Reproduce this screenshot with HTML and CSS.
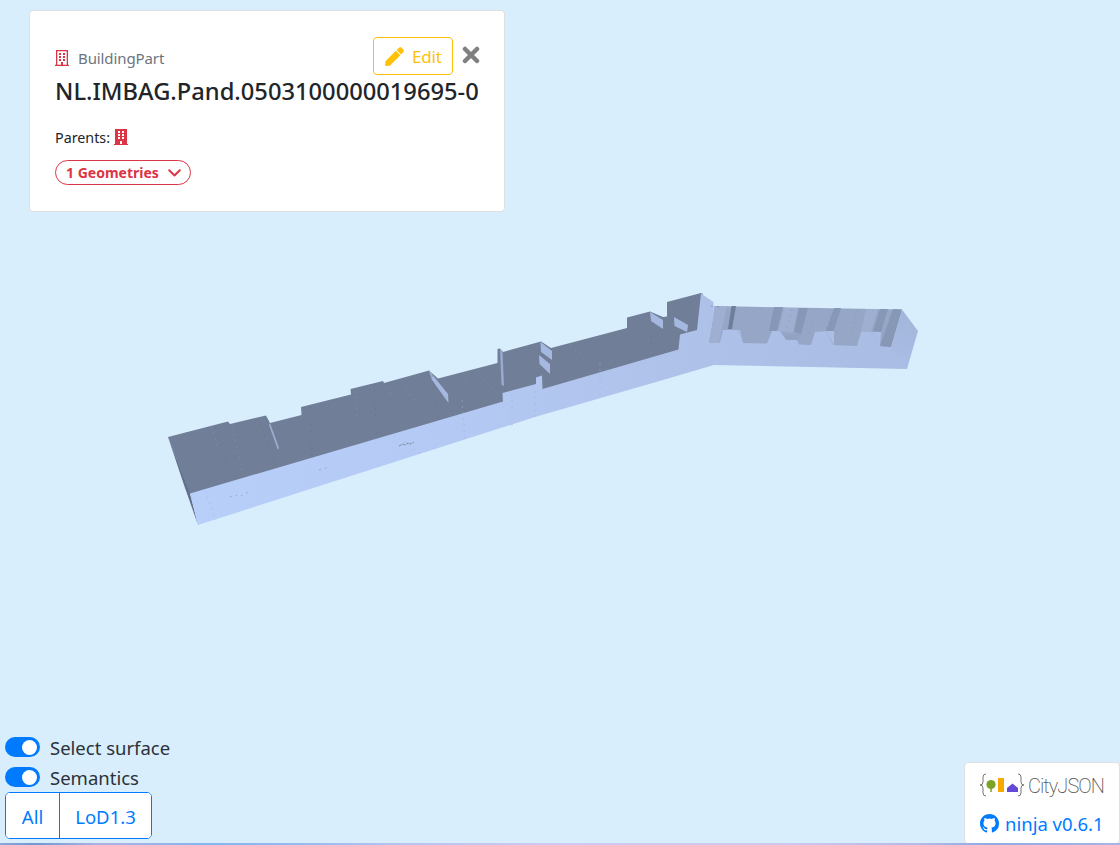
FILE: index.html
```html
<!DOCTYPE html>
<html lang="en">
<head>
<meta charset="utf-8">
<title>CityJSON ninja</title>
<link rel="stylesheet" href="styles.css">
</head>
<body>
<main class="viewer">
  <svg class="scene" viewBox="0 0 1120 845" aria-hidden="true">
    <defs>
      <linearGradient id="wall" x1="190" y1="0" x2="918" y2="0" gradientUnits="userSpaceOnUse">
        <stop offset="0" stop-color="#b8cffa"/><stop offset=".35" stop-color="#b4caf4"/>
        <stop offset=".65" stop-color="#afc2ea"/><stop offset="1" stop-color="#a9bce4"/>
      </linearGradient>
      <linearGradient id="end" x1="0" y1="310" x2="0" y2="369" gradientUnits="userSpaceOnUse">
        <stop offset="0" stop-color="#a2b5da"/><stop offset="1" stop-color="#aabde5"/>
      </linearGradient>
    </defs>
    <!-- left wing, inner walls -->
    <path fill="#707e98" d="M168 437L228 421.500L230 424L266 415.500L270 423L301.500 415L301 407L351 394.500L350.500 389L383 381L384 383L429 370.500L438 378.500L497.500 363L497.500 349L500 348.500L503 352L541 341.500L551 348L627 328L627 317.500L650 311.500L663 317L667 316.500L667 302L701 293L703 294L699 332L681 350L600 380L190 494Z"/>
    <path fill="#62708a" d="M168 437L190 493L198 525L184 485Z"/>
    <!-- outer wall -->
    <path fill="url(#wall)" d="M190 493.500L503 401.500L502.500 393L536 384L536 377.500L542 375.500L542.500 389L678.500 349.500L680 334.500L697 330L701 293.500L713.500 302V320L900 320L907 369L714 365L663 380L535 417L198 525Z"/>
    <path fill="#a5b8df" d="M429 370.500L448 394L448.500 403L432 380ZM540.500 342L552 351L552 360L541 352ZM539 355L550 364L550 374L539.500 364ZM650 312L663 320L663 329L651 321ZM674 317L688 325L687 332L674.500 326Z"/>
    <path fill="#9aabcf" d="M500 348.500L502.500 351L504 386L501.500 385Z"/>
    <path fill="#9fb0d4" d="M270 423L279 448L278 450L269 425Z"/>
    <!-- right wing, inner walls -->
    <path fill="#95a6c7" d="M714 306L902 309.500L891 347L880 346L873 332L861 332L857 346L833 345L826 331L815 332L811 345L799 344.500L797 340L786 340L780 331L772 331L767 343.500L743 343L738 330L723 330L720 342.500H709L713.500 318Z"/>
    <path fill="#8797b6" d="M774 307L783 307L777 331H769ZM799 308L808 308L801 334L794 332ZM834 308L841 308L833 333L826 331ZM880 309L888 309L881 332L873 331ZM893 309L902 309.500L891 347L880 346Z"/>
    <path fill="#6f7e98" d="M731.500 306H736L732 329H728Z"/>
    <path fill="#9eafd2" d="M784 308H798L793 333L778 331ZM866 309H878L871 332H861ZM714 306H727L719 342.500H709L713.500 318Z"/>
    <path fill="#acbee6" d="M826 331H834V345.500ZM873 332H881L880 346ZM738 330H740L743 343Z"/>
    <path fill="#91a2c3" d="M785 335L801 334L797 340L786 339Z"/>
    <path fill="url(#end)" d="M902 309.500L918 331L907 369L891 347Z"/>
    <g class="seams">
      <path stroke="#65738d" d="M215 427L230 479M258 418L276 468M310 406L312 457M374 384L377 438M432 375L438 421M650 330L652 357M711 306L721 307"/>
      <path stroke="#8997b0" d="M211 427L219 450M232 428L243 473M355 396L358 423M383 382L391 394M407 389L418 405M462 372L468 382M483 379L494 391M570 345L590 363M792 309L786 330M831 309L826 330M816 309L808 337M857 310L850 340"/>
      <path stroke="#9fb3d9" d="M205 491L216 520M394 435L422 454M462 400L465 440M512 394L512 427M535 391L535 417M600 363L600 398"/>
      <path stroke="#7d8cab" d="M230 497L236 495L239 497L248 492M319 470L330 467"/>
    </g>
    <path fill="none" stroke="#76839d" stroke-width=".9" stroke-dasharray="3 1" d="M399 446L403 444L405 445L408 443L410 444L414 442"/>
  </svg>

  <section class="card">
    <header class="card-head">
      <div class="kind">
        <svg class="building" viewBox="0 0 14 16"><path fill="none" stroke="currentColor" stroke-width="1.300" d="M1.650 15V.65H12.350V15M0 15.350H14"/><path fill="currentColor" d="M4 3h2v2H4zm4 0h2v2H8zM4 6h2v2H4zm4 0h2v2H8zM4 9h2v2H4zm4 0h2v2H8zM6 12h2v3H6z"/></svg>
        <span class="kind-name">BuildingPart</span>
      </div>
      <div class="actions">
        <button class="edit"><svg class="pencil" viewBox="0 0 512 512"><path fill="currentColor" d="M291 98L414 221 130 505 21 511Q0 511 1 490L12 381zM498 74L438 14Q414-10 387 14L310 79 433 202 498 125Q522 99 498 74z"/></svg><span>Edit</span></button>
        <button class="close" aria-label="Close"><svg viewBox="0 0 18 18"><path d="M3 3L15 15M15 3L3 15" stroke="currentColor" stroke-width="4.500" stroke-linecap="round"/></svg></button>
      </div>
    </header>
    <h1 class="title">NL.IMBAG.Pand.0503100000019695-0</h1>
    <p class="parents"><span class="parents-label">Parents:</span>
      <svg class="building" viewBox="0 0 14 16"><path fill="currentColor" fill-rule="evenodd" d="M1 0H13V15H14V16H0V15H1zM4 2v2h2V2zm4 0v2h2V2zM4 5v2h2V5zm4 0v2h2V5zM4 8v2h2V8zm4 0v2h2V8zM6 12v3h2v-3z"/></svg></p>
    <button class="geometries"><span>1 Geometries</span><svg viewBox="0 0 13 8"><path d="M1.200 1.200L6.500 6.500L11.800 1.200" fill="none" stroke="currentColor" stroke-width="2" stroke-linecap="round" stroke-linejoin="round"/></svg></button>
  </section>

  <footer class="bottom">
    <div class="controls">
      <label class="option"><span class="switch"></span><span class="opt-name">Select surface</span></label>
      <label class="option"><span class="switch"></span><span class="opt-name">Semantics</span></label>
      <div class="lods"><button class="all">All</button><button class="lod">LoD1.3</button></div>
    </div>
    <aside class="brand">
      <div class="logo">
        <svg viewBox="0 0 46 24"><g fill="none" stroke="#777" stroke-width="1"><path d="M7 1Q4 1 4 4V9Q4 12 1 12Q4 12 4 15V20Q4 23 7 23M39 1Q42 1 42 4V9Q42 12 45 12Q42 12 42 15V20Q42 23 39 23"/></g><circle cx="12" cy="11.500" r="4.600" fill="#7ba428"/><path d="M11.300 13h1.500v6h-1.500z" fill="#7ba428"/><path fill="#f9a800" d="M19 5h6v14h-6z"/><path fill="#6349d6" d="M28 15L33.500 10.500L39 15V19H28z"/></svg>
        <span>CityJSON</span>
      </div>
      <a class="version"><svg viewBox="0 0 16 16"><path fill="currentColor" d="M8 0C3.580 0 0 3.580 0 8c0 3.540 2.290 6.530 5.470 7.590.4.070.55-.17.55-.38 0-.19-.01-.82-.01-1.490-2.010.37-2.530-.49-2.690-.94-.09-.23-.48-.94-.82-1.130-.28-.15-.68-.52-.01-.53.63-.01 1.080.58 1.230.82.72 1.210 1.870.87 2.330.66.07-.52.28-.87.51-1.070-1.780-.2-3.640-.89-3.640-3.950 0-.87.31-1.590.82-2.150-.08-.2-.36-1.020.08-2.120 0 0 .67-.21 2.200.82a7.600 7.600 0 0 1 4 0c1.530-1.040 2.200-.82 2.200-.82.44 1.100.16 1.920.08 2.120.51.56.82 1.270.82 2.150 0 3.070-1.870 3.750-3.650 3.950.29.25.54.73.54 1.480 0 1.070-.01 1.930-.01 2.200 0 .21.15.46.55.38A8 8 0 0 0 16 8c0-4.420-3.580-8-8-8z"/></svg><span>ninja v0.6.1</span></a>
    </aside>
  </footer>
  <div class="strip"></div>
</main>
</body>
</html>
```

FILE: styles.css
```css
* { box-sizing: border-box; }
body { margin: 0; font-family: "Noto Sans", "Open Sans", sans-serif; color: #212529; overflow: hidden; }
button { font: inherit; background: #fff; padding: 0; border: 0; }
svg { display: block; flex: none; }
span { white-space: nowrap; }
.viewer { position: relative; width: 1120px; height: 845px; background: #d9eefc; display: flex; flex-direction: column; justify-content: space-between; }
.scene { position: absolute; inset: 0; width: 1120px; height: 845px; }
.seams { fill: none; stroke-width: .8; stroke-dasharray: 2 4; opacity: .65; }
.card { position: relative; width: 476px; height: 202px; margin: 10px 0 0 29px; padding: 26px 24px 26px 25px; background: #fff; border: 1px solid #dfdfdf; border-radius: 4px; }
.card-head { display: flex; justify-content: space-between; height: 38px; }
.kind { display: flex; align-items: center; gap: 9px; padding-top: 4px; }
.building { width: 14px; height: 16px; color: #dc3545; }
.kind-name { font-size: 15px; color: #6c757d; letter-spacing: -.1px; }
.actions { display: flex; gap: 9px; }
.edit { display: flex; align-items: center; width: 80px; height: 38px; padding-left: 11px; gap: 8px; border: 1px solid #ffc107; border-radius: 4px; color: #ffc107; font-size: 17px; letter-spacing: -.2px; }
.pencil { width: 19px; height: 19px; }
.close { width: 18px; height: 18px; margin-top: 9px; color: #808080; }
.title { margin: 0; font-size: 23.700px; font-weight: 500; line-height: 32px; white-space: nowrap; }
.parents { display: flex; align-items: center; gap: 4px; height: 24px; margin: 18px 0 11px; font-size: 14.300px; }
.geometries { display: flex; align-items: center; justify-content: space-between; width: 136px; height: 25px; padding: 0 9px 0 10px; border: 1px solid #dc3545; border-radius: 13px; color: #dc3545; font-size: 14px; font-weight: 700; }
.geometries svg { width: 13px; height: 8px; }
.bottom { position: relative; display: flex; justify-content: space-between; align-items: flex-end; height: 111px; }
.controls { width: 180px; height: 111px; padding-left: 5px; }
.option { display: flex; align-items: center; gap: 10px; height: 30px; font-size: 18.500px; color: #2b3238; }
.opt-name { margin-top: -4px; }
.switch { width: 35px; height: 20px; border-radius: 10px; background: #007bff; padding: 2.500px; margin-top: -4px; }
.switch::after { content: ""; display: block; width: 15px; height: 15px; margin-left: 14.500px; border-radius: 50%; background: #fff; }
.lods { display: flex; width: 147px; height: 47px; margin-top: -2px; border: 1px solid #007bff; border-radius: 5px; background: #fff; overflow: hidden; font-size: 18.500px; color: #007bff; }
.lods button { color: inherit; padding-top: 1px; }
.all { width: 54px; border-right: 1px solid #007bff; }
.lod { flex: 1; }
.brand { width: 156px; height: 82px; margin-bottom: 1px; padding: 10px 15px; background: #fff; border: 1px solid #dfdfdf; border-radius: 4px; }
.logo { display: flex; align-items: center; gap: 3px; height: 24px; margin-left: -1px; font: 200 20px/24px Roboto, sans-serif; color: #555; letter-spacing: -.95px; }
.logo span { padding-top: 1px; }
.logo svg { width: 46px; height: 24px; }
.version { display: flex; align-items: center; gap: 6px; height: 30px; margin-top: 11px; color: #007bff; font-size: 18.500px; }
.version svg { width: 19px; height: 19px; }
.strip { position: absolute; left: 0; right: 0; bottom: 0; height: 2px; background: linear-gradient(90deg, #8fa8d8, #6f98d6 3%, #b0b2e2 9%, #86b4f0 18%, #94b9f2 26%, #b9c3ee 36%, #d0c8ee 50%, #cfc6ec 70%, #b6b9e6 82%, #8fabe4 88%, #a8b4e6); }
```
